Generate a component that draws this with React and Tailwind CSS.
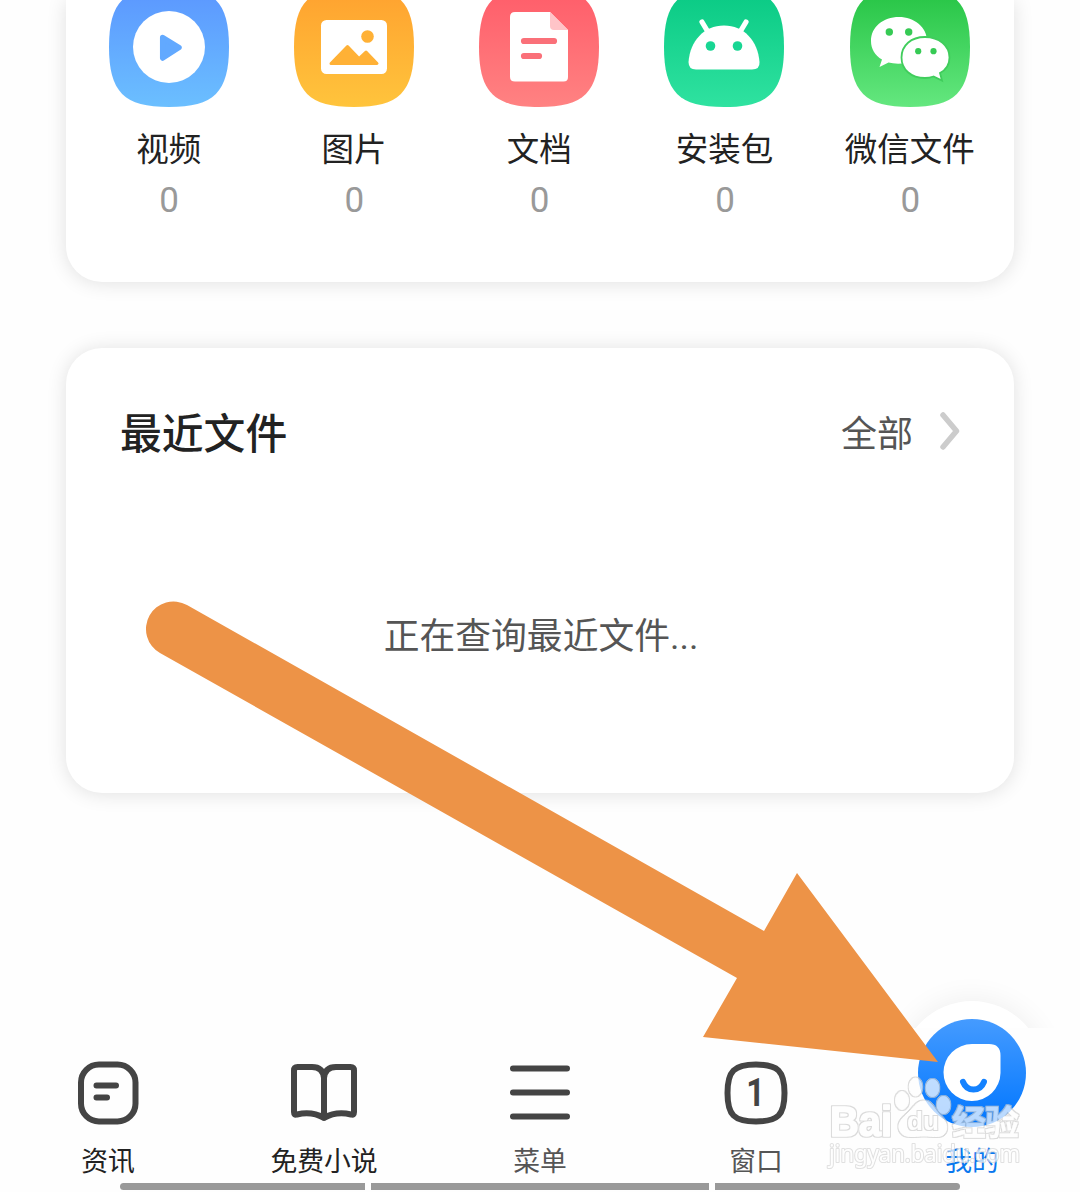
const SQUIRCLE = 'M60 0C105 0 120 15 120 60S105 120 60 120S0 105 0 60S15 0 60 0Z';

function Tile({ id, from, to, children }) {
  return (
    <svg className="h-[120px] w-[120px]" viewBox="0 0 120 120">
      <defs>
        <linearGradient id={id} x1="0" y1="0" x2="0" y2="1">
          <stop offset="0" stopColor={from} />
          <stop offset="1" stopColor={to} />
        </linearGradient>
      </defs>
      <path d={SQUIRCLE} fill={`url(#${id})`} />
      {children}
    </svg>
  );
}

const categories = [
  {
    label: '视频',
    icon: (
      <Tile id="video" from="#5b96ff" to="#6bbfff">
        <circle cx="60" cy="60" r="36" fill="#fff" />
        <path d="M53.7 50.5L70 60.5L53.7 71Z" fill="#62a9ff" stroke="#62a9ff" strokeWidth="5.5" strokeLinejoin="round" />
      </Tile>
    ),
  },
  {
    label: '图片',
    icon: (
      <Tile id="image" from="#ffa12f" to="#ffc43c">
        <rect x="27" y="33" width="66" height="54" rx="5.5" fill="#fff" />
        <circle cx="73.5" cy="49.5" r="6.3" fill="#ffb136" />
        <path d="M37 76.5L53.5 59.5L65 71.5L72 65L83 76.5Z" fill="#ffb136" stroke="#ffb136" strokeWidth="3" strokeLinejoin="round" />
      </Tile>
    ),
  },
  {
    label: '文档',
    icon: (
      <Tile id="doc" from="#ff5c69" to="#ff8282">
        <path d="M36 25H71L89 43V90Q89 94.5 84.5 94.5H36Q31 94.5 31 90V30Q31 25 36 25Z" fill="#fff" />
        <path d="M71 25L89 43H75Q71 43 71 39Z" fill="#ffc4c8" />
        <path d="M45 54H75M45 69H60" stroke="#fa7079" strokeWidth="6.2" strokeLinecap="round" />
      </Tile>
    ),
  },
  {
    label: '安装包',
    icon: (
      <Tile id="apk" from="#08c983" to="#2fe2a0">
        <path d="M60 38.5C40 38.5 26 54 24.5 75Q24.5 82.5 32 82.5H88Q96 82.5 95.5 75C94 54 80 38.5 60 38.5Z" fill="#fff" />
        <path d="M38 35L44 45M82 35L76 45" stroke="#fff" strokeWidth="5.2" strokeLinecap="round" />
        <circle cx="46.5" cy="59" r="4.8" fill="#18d693" />
        <circle cx="73.5" cy="59" r="4.8" fill="#18d693" />
      </Tile>
    ),
  },
  {
    label: '微信文件',
    icon: (
      <Tile id="wechat" from="#24c343" to="#64e77f">
        <path d="M49 30C33 30 21 40 21 54C21 62 25 68.5 32 72.5L29.5 80L38.5 75.5Q44 77 52 76.5C65 77 77 67 77 54C77 40 64 30 49 30Z" fill="#fff" />
        <path d="M75 49.5C61 49.5 51 58 51 70.5C51 82 61 91 75 91Q79 91 83 89.8L92 94L90 86.5Q99.5 81 99.5 70.5C99.5 58 89 49.5 75 49.5Z" transform="translate(0 -12.5)" fill="none" />
        <path d="M75 37C61 37 51.5 45.500 51.5 57.500C51.5 69.500 61 78 75 78Q79.5 78 83.5 76.500L92 80.500L90 73Q99.5 68 99.5 57.500C99.5 45.500 89 37 75 37Z" transform="translate(0 13)" fill="#fff" stroke="#40cd5c" strokeWidth="1.8" />
        <g fill="#36ca54">
          <circle cx="39.3" cy="45" r="3.7" />
          <circle cx="58.7" cy="45" r="3.7" />
          <circle cx="68.2" cy="64.2" r="3.1" />
          <circle cx="83.5" cy="64.2" r="3.1" />
        </g>
      </Tile>
    ),
  },
];

const navItems = [
  {
    label: '资讯',
    color: 'text-[#222]',
    icon: (
      <>
        <rect x="5" y="4.5" width="54.5" height="57" rx="18" />
        <path d="M20.5 25.5H40M20.5 37.5H31" />
      </>
    ),
  },
  {
    label: '免费小说',
    color: 'text-[#222]',
    icon: (
      <path d="M32 58V18Q31 7 20 7H5.5Q2 7 2 10.5V52Q2 55.5 5 54.5Q20 51 32 58Q44 51 59 54.5Q62 55.5 62 52V10.5Q62 7 58.5 7H44Q33 7 32 18" />
    ),
  },
  {
    label: '菜单',
    color: 'text-[#555]',
    icon: <path d="M5 8.5H59M5 32.5H59M5 56.5H59" />,
  },
  {
    label: '窗口',
    color: 'text-[#555]',
    icon: (
      <>
        <path d="M32 4.5C54 4.5 60.5 11 60.5 33S54 61.5 32 61.5S3.5 55 3.5 33S10 4.5 32 4.5Z" />
        <text x="0" y="0" transform="translate(31.500 46) scale(0.850 1)" textAnchor="middle" fontSize="38" fontWeight="700" fontFamily="Roboto, sans-serif" fill="#444" stroke="none">1</text>
      </>
    ),
  },
];

function ProfileButton() {
  return (
    <svg className="h-[108px] w-[108px]" viewBox="0 0 108 108">
      <defs>
        <linearGradient id="me" x1="0" y1="0" x2="0" y2="1">
          <stop offset="0" stopColor="#459bff" />
          <stop offset="1" stopColor="#0076ff" />
        </linearGradient>
      </defs>
      <circle cx="54" cy="54" r="54" fill="url(#me)" />
      <path d="M54 25H71Q82.5 25 82.5 36.5V54A28.5 28.5 0 1 1 54 25Z" fill="#fff" />
      <path d="M45 62.8C49 73 62 73 66 62.8" fill="none" stroke="#1482ff" strokeWidth="6" strokeLinecap="round" />
    </svg>
  );
}

function Watermark() {
  return (
    <svg className="absolute left-[820px] top-[1070px] h-[110px] w-[220px]" viewBox="0 0 220 110">
      <defs>
        <filter id="rim" x="-5%" y="-5%" width="110%" height="110%">
          <feMorphology in="SourceAlpha" operator="dilate" radius="1" result="grown" />
          <feFlood floodColor="#cdcdcd" />
          <feComposite in2="grown" operator="in" result="edge" />
          <feMerge>
            <feMergeNode in="edge" />
            <feMergeNode in="SourceGraphic" />
          </feMerge>
        </filter>
      </defs>
      <g opacity="0.72" fill="#fff" stroke="#fff" strokeLinejoin="round">
        <g filter="url(#rim)" strokeWidth="1">
          <ellipse cx="82" cy="30.5" rx="6.5" ry="9" />
          <ellipse cx="95.5" cy="17" rx="6.3" ry="9" />
          <ellipse cx="112.5" cy="18" rx="6.3" ry="8.5" />
          <ellipse cx="123.5" cy="35" rx="6.3" ry="8.5" />
          <path d="M104 31C96 31 93 39 87 44C80 50 77 55 80 61C84 69 94 66 104 66S123 69 126 61C129 53 122 48 118 43C113 37 111 31 104 31Z" />
          <text x="10" y="66" fontSize="43" fontWeight="700" fontFamily="'Liberation Sans', sans-serif" strokeWidth="1.5" textLength="62" lengthAdjust="spacingAndGlyphs">Bai</text>
          <text x="132" y="65" fontSize="34" fontWeight="700" fontFamily="'Noto Sans CJK SC', sans-serif" strokeWidth="0.3" textLength="67">经验</text>
        </g>
        <text x="9" y="92" fontSize="23" fontFamily="'Noto Sans', sans-serif" stroke="#d6d6d6" strokeWidth="2.200" paintOrder="stroke" textLength="191" lengthAdjust="spacingAndGlyphs">jingyan.baidu.com</text>
        <g filter="url(#rim)">
          <text x="87" y="60" fontSize="26" fontWeight="700" fontFamily="'Liberation Sans', sans-serif" stroke="none" textLength="32" lengthAdjust="spacingAndGlyphs">du</text>
        </g>
      </g>
    </svg>
  );
}

export default function App() {
  return (
    <div className="relative flex h-[1192px] w-[1080px] flex-col overflow-hidden bg-[#fefefe] font-['Roboto','Noto_Sans_CJK_SC',sans-serif]">
      <section className="mx-auto h-[282px] w-[948px] shrink-0 rounded-b-[36px] bg-white shadow-[0_1px_20px_rgba(0,0,0,0.12)]">
        <div className="-mt-[13px] ml-[10px] grid w-[926.4px] grid-cols-5">
          {categories.map((c) => (
            <div key={c.label} className="flex flex-col items-center">
              {c.icon}
              <span className="mt-[19px] h-12 whitespace-nowrap text-[32.5px] leading-[48px] text-[#222]">{c.label}</span>
              <span className="mt-[3px] pl-[1px] text-[35px] leading-[48px] text-[#999]">0</span>
            </div>
          ))}
        </div>
      </section>

      <section className="mx-auto mt-[66px] h-[445px] w-[948px] shrink-0 rounded-[36px] bg-white pl-[54px] pr-[54px] pt-[60px] shadow-[0_1px_20px_rgba(0,0,0,0.12)]">
        <div className="flex h-[54px] items-center justify-between">
          <h2 className="text-[41.8px] font-medium leading-[54px] text-[#222]">最近文件</h2>
          <div className="flex items-center gap-[27px]">
            <span className="text-[36px] leading-[54px] text-[#555]">全部</span>
            <svg className="-mt-[8px] h-[38px] w-[20px]" viewBox="0 0 20 38" fill="none">
              <path d="M3 3L16.5 19L3 35" stroke="#ccc" strokeWidth="5.5" strokeLinecap="round" strokeLinejoin="round" />
            </svg>
          </div>
        </div>
        <p className="mt-[148px] pl-[2px] text-center text-[35.8px] leading-[54px] text-[#555]">正在查询最近文件...</p>
      </section>

      <div className="absolute left-[900px] top-[1001px] h-[144px] w-[144px] rounded-full bg-white shadow-[0_0_30px_rgba(0,0,0,0.07)]" />

      <nav className="relative mt-[235px] grid h-[155px] shrink-0 grid-cols-5 bg-[#fefefe]">
        {navItems.map((n) => (
          <div key={n.label} className="flex flex-col items-center pt-8">
            <svg className="h-16 w-[66px] overflow-visible" viewBox="-1 0 66 64" fill="none" stroke="#444" strokeWidth="6" strokeLinecap="round" strokeLinejoin="round">
              {n.icon}
            </svg>
            <span className={`mt-[18px] text-[26.8px] leading-[40px] ${n.color}`}>{n.label}</span>
          </div>
        ))}
        <div className="-mt-[9px] flex flex-col items-center">
          <ProfileButton />
          <span className="mt-[15px] text-[26.8px] leading-[40px] text-[#0a78ee]">我的</span>
        </div>
      </nav>
      <div className="mx-auto flex h-[7px] w-[840px] shrink-0 gap-[6px]">
        <div className="w-[245px] rounded-l-full bg-[#999]" />
        <div className="w-[338px] bg-[#999]" />
        <div className="w-[245px] rounded-r-full bg-[#999]" />
      </div>

      <svg className="absolute left-0 top-0 h-[1192px] w-[1080px]" viewBox="0 0 1080 1192">
        <path d="M187 605L764 931L797 873L938 1062L703 1037L737 978L160 653A27 27 0 0 1 187 605Z" fill="#ed9347" />
      </svg>
      <Watermark />
    </div>
  );
}
